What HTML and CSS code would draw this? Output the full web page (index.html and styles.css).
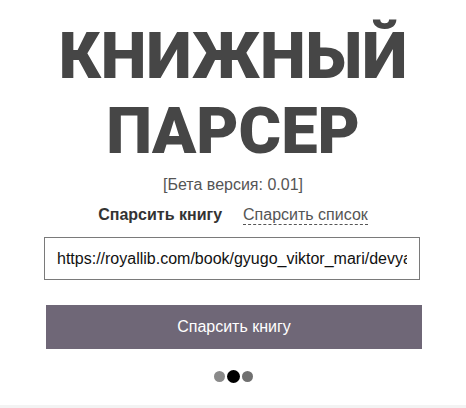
FILE: index.html
```html
<!DOCTYPE html>
<html lang="ru">
<head>
<meta charset="utf-8">
<title>Книжный парсер</title>
<link rel="stylesheet" href="styles.css">
</head>
<body>
<main class="page">
  <h1 class="title">КНИЖНЫЙ<br>ПАРСЕР</h1>
  <p class="version">[Бета версия: 0.01]</p>
  <nav class="tabs">
    <span class="tab tab-active">Спарсить книгу</span>
    <span class="tab tab-link">Спарсить список</span>
  </nav>
  <form class="form">
    <input class="url" type="text" value="https://royallib.com/book/gyugo_viktor_mari/devyanosto_tretiy_god.html">
    <button class="submit" type="button">Спарсить книгу</button>
  </form>
  <div class="dots">
    <span class="dot dot-a"></span>
    <span class="dot dot-b"></span>
    <span class="dot dot-c"></span>
  </div>
</main>
<footer class="footer"></footer>
</body>
</html>
```
FILE: styles.css
```css
html, body {
  margin: 0;
  padding: 0;
  background: #ffffff;
}
body {
  font-family: "Liberation Sans", Arial, sans-serif;
  height: 408px;
  display: flex;
  flex-direction: column;
  overflow: hidden;
}
.page {
  flex: 1;
  display: flex;
  flex-direction: column;
  align-items: center;
}
.title {
  margin: 19px 0 0;
  font-family: Roboto, sans-serif;
  font-weight: 900;
  font-size: 65px;
  line-height: 75px;
  color: #464646;
  text-align: center;
  letter-spacing: 0;
}
.version {
  margin: 7px 0 0;
  font-size: 16px;
  line-height: 18px;
  color: #555555;
}
.tabs {
  margin-top: 11px;
  display: flex;
  gap: 21px;
  font-size: 16px;
  line-height: 20px;
}
.tab-active {
  font-weight: bold;
  color: #333333;
}
.tab-link {
  color: #555555;
  border-bottom: 1px dashed #555555;
  line-height: 18px;
  align-self: flex-start;
  margin-top: 1px;
}
.form {
  margin-top: 12px;
  display: flex;
  flex-direction: column;
  width: 376px;
}
.url {
  box-sizing: border-box;
  width: 376px;
  height: 43px;
  margin: 0 0 0 -1px;
  padding: 0 12px;
  border: 1px solid #7a7a7a;
  border-radius: 0;
  font-family: "Liberation Sans", Arial, sans-serif;
  font-size: 16px;
  color: #111111;
  background: #ffffff;
  outline: none;
}
.submit {
  margin: 25px 0 0 1px;
  width: 376px;
  height: 44px;
  border: 0;
  border-radius: 0;
  background: #6f6777;
  color: #ffffff;
  font-family: "Liberation Sans", Arial, sans-serif;
  font-size: 16px;
}
.dots {
  margin-top: 21px;
  display: flex;
  align-items: center;
  gap: 2px;
}
.dot {
  display: block;
  border-radius: 50%;
}
.dot-a {
  width: 11px;
  height: 11px;
  background: #8a8a8a;
}
.dot-b {
  width: 13px;
  height: 13px;
  background: #000000;
}
.dot-c {
  width: 11px;
  height: 11px;
  background: #707070;
}
.footer {
  height: 3px;
  background: #f3f3f3;
}
```
